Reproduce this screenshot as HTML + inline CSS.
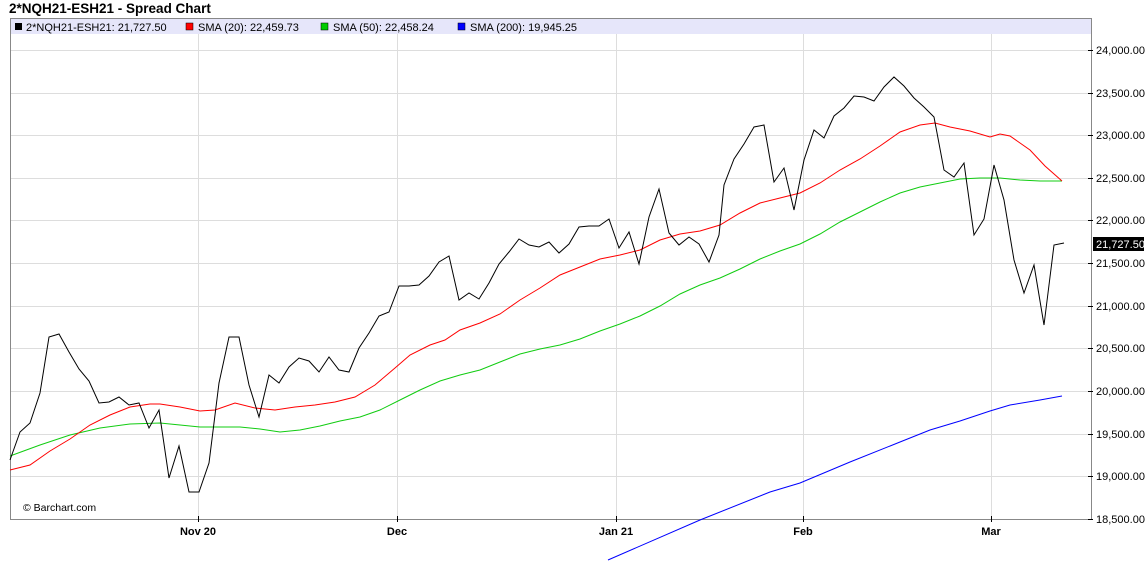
<!DOCTYPE html>
<html><head><style>
body{margin:0;background:#fff;width:1145px;height:561px;overflow:hidden;font-family:"Liberation Sans",Arial,sans-serif}
.t{position:absolute;left:9px;top:1px;font-size:13.5px;font-weight:bold;color:#000}
</style></head><body>
<div class="t">2*NQH21-ESH21 - Spread Chart</div>
<svg width="1145" height="561" style="position:absolute;left:0;top:0" font-family="Liberation Sans,Arial,sans-serif">
<rect x="10.5" y="18.5" width="1081" height="501" fill="#fff" stroke="#888"/>
<rect x="11" y="19" width="1080" height="15" fill="#e6e6fa"/>
<g stroke="#ddd" stroke-width="1">
<line x1="11" x2="1091" y1="50.5" y2="50.5"/><line x1="11" x2="1091" y1="93.5" y2="93.5"/><line x1="11" x2="1091" y1="135.5" y2="135.5"/><line x1="11" x2="1091" y1="178.5" y2="178.5"/><line x1="11" x2="1091" y1="220.5" y2="220.5"/><line x1="11" x2="1091" y1="263.5" y2="263.5"/><line x1="11" x2="1091" y1="306.5" y2="306.5"/><line x1="11" x2="1091" y1="348.5" y2="348.5"/><line x1="11" x2="1091" y1="391.5" y2="391.5"/><line x1="11" x2="1091" y1="434.5" y2="434.5"/><line x1="11" x2="1091" y1="476.5" y2="476.5"/>
<line x1="198.5" x2="198.5" y1="34" y2="519"/><line x1="397.5" x2="397.5" y1="34" y2="519"/><line x1="616.5" x2="616.5" y1="34" y2="519"/><line x1="803.5" x2="803.5" y1="34" y2="519"/><line x1="991.5" x2="991.5" y1="34" y2="519"/>
</g>
<g stroke="#000"><line x1="1088" x2="1093" y1="50.5" y2="50.5"/><line x1="1088" x2="1093" y1="93.5" y2="93.5"/><line x1="1088" x2="1093" y1="135.5" y2="135.5"/><line x1="1088" x2="1093" y1="178.5" y2="178.5"/><line x1="1088" x2="1093" y1="220.5" y2="220.5"/><line x1="1088" x2="1093" y1="263.5" y2="263.5"/><line x1="1088" x2="1093" y1="306.5" y2="306.5"/><line x1="1088" x2="1093" y1="348.5" y2="348.5"/><line x1="1088" x2="1093" y1="391.5" y2="391.5"/><line x1="1088" x2="1093" y1="434.5" y2="434.5"/><line x1="1088" x2="1093" y1="476.5" y2="476.5"/><line x1="1088" x2="1093" y1="519.5" y2="519.5"/>
<line x1="198.5" x2="198.5" y1="516" y2="522"/><line x1="397.5" x2="397.5" y1="516" y2="522"/><line x1="616.5" x2="616.5" y1="516" y2="522"/><line x1="803.5" x2="803.5" y1="516" y2="522"/><line x1="991.5" x2="991.5" y1="516" y2="522"/></g>
<g font-size="11" fill="#000">
<text x="1096" y="54">24,000.00</text><text x="1096" y="97">23,500.00</text><text x="1096" y="139">23,000.00</text><text x="1096" y="182">22,500.00</text><text x="1096" y="224">22,000.00</text><text x="1096" y="310">21,000.00</text><text x="1096" y="352">20,500.00</text><text x="1096" y="395">20,000.00</text><text x="1096" y="438">19,500.00</text><text x="1096" y="480">19,000.00</text><text x="1096" y="523">18,500.00</text>
<text x="1096" y="267">21,500.00</text>
</g>
<rect x="1093" y="237" width="51" height="14" fill="#000"/>
<text x="1096" y="248" font-size="11" fill="#fff">21,727.50</text>
<g font-size="11" font-weight="bold" text-anchor="middle"><text x="198" y="535">Nov 20</text><text x="397" y="535">Dec</text><text x="616" y="535">Jan 21</text><text x="803" y="535">Feb</text><text x="991" y="535">Mar</text></g>
<text x="23" y="511" font-size="10.5">© Barchart.com</text>
<g font-size="11">
<rect x="15" y="23" width="7" height="7" fill="#000"/><text x="26" y="31">2*NQH21-ESH21: 21,727.50</text>
<rect x="186" y="23" width="7" height="7" fill="#f00" stroke="#000" stroke-width=".5"/><text x="198" y="31">SMA (20): 22,459.73</text>
<rect x="321" y="23" width="7" height="7" fill="#0c0" stroke="#000" stroke-width=".5"/><text x="333" y="31">SMA (50): 22,458.24</text>
<rect x="458" y="23" width="7" height="7" fill="#00f" stroke="#000" stroke-width=".5"/><text x="470" y="31">SMA (200): 19,945.25</text>
</g>
<g fill="none" stroke-width="1">
<polyline stroke="#00f" points="608,560 700,520 770,492 800,483 850,462 900,442 930,430 960,421 990,411 1010,405 1040,400 1062,396"/>
<polyline stroke="#1c1" points="10,456 40,445 70,435 100,428 130,424 160,423 200,427 240,427 260,429 280,432 300,430 320,426 340,421 360,417 380,410 400,400 420,390 440,381 460,375 480,370 500,362 520,354 540,349 560,345 580,339 600,331 620,324 640,316 660,306 680,294 700,285 720,278 740,269 760,259 780,251 800,244 820,234 840,222 860,212 880,202 900,193 920,187 940,183 960,179 980,178 1000,178 1020,180 1040,181 1062,181"/>
<polyline stroke="#f00" points="10,470 30,465 50,451 70,439 90,425 110,415 130,407 150,404 160,404 180,407 200,411 215,410 235,403 255,408 275,410 295,407 315,405 335,402 355,397 375,385 395,368 410,355 430,345 445,340 460,330 480,323 500,314 520,300 540,288 560,275 580,267 600,259 620,255 640,250 660,240 680,234 700,231 720,225 740,213 760,203 780,198 800,193 820,183 840,170 860,159 880,146 900,132 920,125 935,123 950,127 970,131 990,137 1000,134 1010,136 1030,150 1045,166 1062,181"/>
<polyline stroke="#000" points="10,460 20,432 30,423 40,393 49,337 59,334 69,352 79,369 89,381 99,403 109,402 119,397 129,405 139,403 149,428 159,410 169,478 179,446 189,492 199,492 209,463 219,383 229,337 239,337 249,385 259,417 269,375 279,383 289,367 299,358 309,361 319,372 329,357 339,370 349,372 359,348 369,333 379,316 389,312 399,286 409,286 419,285 429,276 439,262 449,256 459,300 469,293 479,299 489,283 499,264 509,252 519,239 529,245 539,247 549,242 559,253 569,244 579,227 589,226 599,226 609,219 619,248 629,232 639,264 649,217 659,189 669,233 679,245 689,237 699,244 709,262 719,235 724,185 734,159 744,144 754,127 764,125 774,182 784,168 794,210 804,160 814,130 824,138 834,116 844,108 854,96 864,97 874,101 884,87 894,77 904,86 914,98 924,107 934,117 944,170 954,177 964,163 974,235 984,219 994,165 1004,200 1014,260 1024,293 1034,265 1044,325 1054,245 1064,243"/>
</g>
</svg>
</body></html>
